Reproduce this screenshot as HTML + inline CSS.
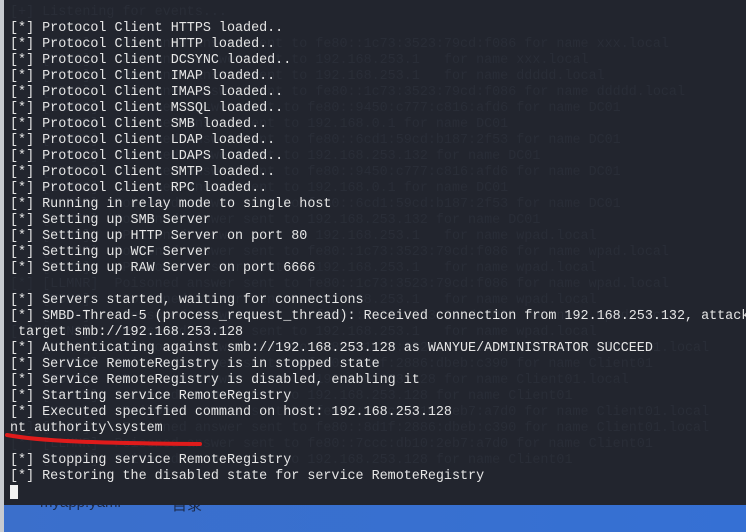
<!DOCTYPE html>
<html><head><meta charset="utf-8"><style>
html,body{margin:0;padding:0;width:746px;height:532px;overflow:hidden;background:#22252e;}
#desk{position:absolute;left:4px;top:505px;width:742px;height:27px;background:linear-gradient(90deg,#3b6fcb,#3570d4);}
.dk{position:absolute;top:494px;font-family:"Liberation Sans","Noto Sans CJK SC",sans-serif;font-size:15px;color:#1c2a4a;}
#term{position:absolute;left:0;top:0;width:746px;height:505px;background:#22252e;}
#strip{position:absolute;left:0;top:0;width:4px;height:532px;background:#c8cbd0;}
pre{position:absolute;left:10px;margin:0;font-family:"Liberation Mono","DejaVu Sans Mono",monospace;font-size:13.4px;line-height:16px;white-space:pre;}
#ghost{color:#292d37;top:5px;}
#main{color:#e6e6e6;top:21px;}
.cur{display:inline-block;width:8px;height:14px;background:#f2f2f2;vertical-align:-3px;}
</style></head><body>
<div id="desk"></div>
<div class="dk" style="left:40px">myapp.yaml</div>
<div class="dk" style="left:172px">目录</div>
<div id="term"></div>
<div id="strip"></div>
<pre id="ghost">[+] Listening for events...

[*] [MDNS]    Poisoned answer sent to fe80::1c73:3523:79cd:f086 for name xxx.local
[*] [MDNS]    Poisoned answer sent to 192.168.253.1   for name xxx.local
[*] [MDNS]    Poisoned answer sent to 192.168.253.1   for name ddddd.local
[*] [MDNS]    Poisoned answer sent to fe80::1c73:3523:79cd:f086 for name ddddd.local
[*] [LLMNR]  Poisoned answer sent to fe80::9450:c777:c816:afd6 for name DC01
[*] [LLMNR]  Poisoned answer sent to 192.168.0.1 for name DC01
[*] [LLMNR]  Poisoned answer sent to fe80::6cd1:59cd:b187:2f53 for name DC01
[*] [LLMNR]  Poisoned answer sent to 192.168.253.132 for name DC01
[*] [LLMNR]  Poisoned answer sent to fe80::9450:c777:c816:afd6 for name DC01
[*] [LLMNR]  Poisoned answer sent to 192.168.0.1 for name DC01
[*] [LLMNR]  Poisoned answer sent to fe80::6cd1:59cd:b187:2f53 for name DC01
[*] [LLMNR]  Poisoned answer sent to 192.168.253.132 for name DC01
[*] [MDNS]    Poisoned answer sent to 192.168.253.1   for name wpad.local
[*] [LLMNR]  Poisoned answer sent to fe80::1c73:3523:79cd:f086 for name wpad.local
[*] [MDNS]    Poisoned answer sent to 192.168.253.1   for name wpad.local
[*] [LLMNR]  Poisoned answer sent to fe80::1c73:3523:79cd:f086 for name wpad.local
[*] [MDNS]    Poisoned answer sent to 192.168.253.1   for name wpad.local
[*] [MDNS]    Poisoned answer sent to fe80::1c73:3523:79cd:f086 for name wpad.local
[*] [MDNS]    Poisoned answer sent to 192.168.253.1   for name wpad.local
[*] [MDNS]    Poisoned answer sent to fe80::1c73:3523:79cd:f086 for name Client01.local
[*] [LLMNR]  Poisoned answer sent to fe80::8d1f:2886:dbeb:c390 for name Client01
[*] [MDNS]    Poisoned answer sent to 192.168.253.128 for name Client01.local
[*] [LLMNR]  Poisoned answer sent to 192.168.253.128 for name Client01
[*] [MDNS]    Poisoned answer sent to fe80::7ccc:db10:2eb7:a7d0 for name Client01.local
[*] [MDNS]    Poisoned answer sent to fe80::8d1f:2886:dbeb:c390 for name Client01.local
[*] [LLMNR]  Poisoned answer sent to fe80::7ccc:db10:2eb7:a7d0 for name Client01
[*] [LLMNR]  Poisoned answer sent to 192.168.253.128 for name Client01</pre>
<pre id="main">[*] Protocol Client HTTPS loaded..
[*] Protocol Client HTTP loaded..
[*] Protocol Client DCSYNC loaded..
[*] Protocol Client IMAP loaded..
[*] Protocol Client IMAPS loaded..
[*] Protocol Client MSSQL loaded..
[*] Protocol Client SMB loaded..
[*] Protocol Client LDAP loaded..
[*] Protocol Client LDAPS loaded..
[*] Protocol Client SMTP loaded..
[*] Protocol Client RPC loaded..
[*] Running in relay mode to single host
[*] Setting up SMB Server
[*] Setting up HTTP Server on port 80
[*] Setting up WCF Server
[*] Setting up RAW Server on port 6666

[*] Servers started, waiting for connections
[*] SMBD-Thread-5 (process_request_thread): Received connection from 192.168.253.132, attack
 target smb://192.168.253.128
[*] Authenticating against smb://192.168.253.128 as WANYUE/ADMINISTRATOR SUCCEED
[*] Service RemoteRegistry is in stopped state
[*] Service RemoteRegistry is disabled, enabling it
[*] Starting service RemoteRegistry
[*] Executed specified command on host: 192.168.253.128
nt authority\system

[*] Stopping service RemoteRegistry
[*] Restoring the disabled state for service RemoteRegistry
<span class="cur"></span></pre>
<svg style="position:absolute;left:0;top:0" width="746" height="532"><path d="M7 435 C 40 441, 90 443, 200 444" stroke="#e01b1b" stroke-width="4" fill="none" stroke-linecap="round"/></svg>
</body></html>
